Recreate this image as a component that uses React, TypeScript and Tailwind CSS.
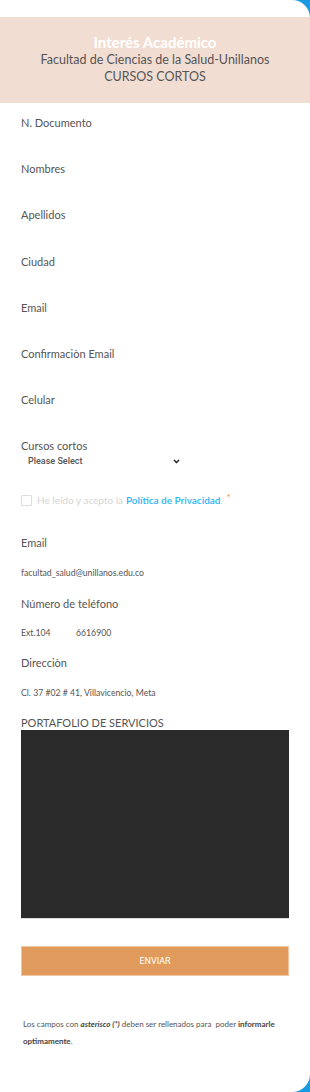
import React from 'react';

const fields = ['N. Documento', 'Nombres', 'Apellidos', 'Ciudad', 'Email', 'Confirmaciòn Email', 'Celular'];

export default function App() {
  return (
    <div className="w-[310px] h-[1092px] bg-[#1a9be0] overflow-hidden" style={{ fontFamily: 'Lato, "Open Sans", sans-serif' }}>
      <div className="w-[310px] h-[1092px] bg-white rounded-tr-[18px] rounded-br-[18px] overflow-hidden pt-[17px]">
        <div className="bg-[#f2ddd2] h-[86px] flex flex-col items-center pt-[16px]">
          <div className="text-white font-bold text-[15px] leading-[18px]">Interés Académico</div>
          <div className="text-[#555] text-[12.5px] leading-[17px]">Facultad de Ciencias de la Salud-Unillanos</div>
          <div className="text-[#555] text-[12.5px] leading-[17px]">CURSOS CORTOS</div>
        </div>

        <div className="px-[21px]">
          <div className="pt-[13px] flex flex-col">
            {fields.map((f) => (
              <div key={f} className="h-[46.2px] text-[11px] leading-[14px] text-[#555]">{f}</div>
            ))}
          </div>

          <div className="text-[11px] leading-[14px] text-[#555]">Cursos cortos</div>
          <div className="flex items-center w-[159px] pl-[7px] mt-[1px] h-[14px]">
            <span className="text-[9px] text-[#555] font-medium" style={{ fontFamily: 'Roboto, sans-serif' }}>Please Select</span>
            <svg className="ml-auto" width="7" height="5" viewBox="0 0 7 5">
              <path d="M1 1l2.5 2.5L6 1" stroke="#222" strokeWidth="1.5" fill="none" />
            </svg>
          </div>

          <div className="flex items-center mt-[26px] h-[12px]">
            <div className="w-[11px] h-[11px] border border-[#ddd] rounded-[1px]" />
            <span className="ml-[5px] text-[10px] text-[#d5d5d5]">He leído y acepto la </span>
            <span className="ml-[3px] text-[10px] text-[#29b6f6] font-semibold">Política de Privacidad</span>
            <span className="text-[10px] text-[#d5d5d5]">.</span>
            <span className="ml-[4px] text-[9px] text-[#f0882a] -mt-[5px]">*</span>
          </div>

          <div className="mt-[30px] text-[11px] leading-[14px] text-[#555]">Email</div>
          <div className="mt-[18px] text-[8.7px] leading-[10px] text-[#555]">facultad_salud@unillanos.edu.co</div>
          <div className="mt-[19px] text-[11px] leading-[14px] text-[#555]">Número de teléfono</div>
          <div className="mt-[17px] text-[8.7px] leading-[10px] text-[#555] flex">
            <span className="w-[55px]">Ext.104</span>
            <span>6616900</span>
          </div>
          <div className="mt-[18px] text-[11px] leading-[14px] text-[#555]">Direcciòn</div>
          <div className="mt-[18px] text-[8.7px] leading-[10px] text-[#555]">Cl. 37 #02 # 41, Villavicencio, Meta</div>
          <div className="mt-[18px] text-[11px] leading-[14px] text-[#555]">PORTAFOLIO DE SERVICIOS</div>
          <div className="h-[189px] bg-[#2a2a2a] border-b border-[#ddd]" />

          <div className="mt-[27px] h-[30px] bg-[#e09a5c] border border-[#f0c7a2] flex items-center justify-center">
            <span className="text-white text-[9px]" style={{ fontFamily: 'Roboto, sans-serif' }}>ENVIAR</span>
          </div>

          <div className="mt-[40px] pl-[2px] text-[8px] leading-[17px] text-[#555] pr-[10px]">
            Los campos con <b className="italic text-[#444]">asterisco (*)</b> deben ser rellenados para &nbsp;poder <b className="text-[#444]">informarle optimamente</b>.
          </div>
        </div>
      </div>
    </div>
  );
}
